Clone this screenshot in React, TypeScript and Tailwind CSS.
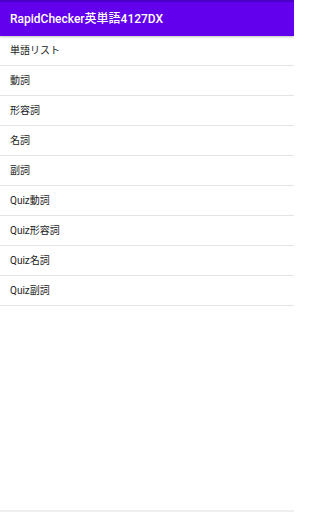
import React from "react";

const items = ["単語リスト", "動詞", "形容詞", "名詞", "副詞", "Quiz動詞", "Quiz形容詞", "Quiz名詞", "Quiz副詞"];

export default function App() {
  return (
    <div
      className="w-[294px] h-[512px] bg-white flex flex-col overflow-hidden"
      style={{ fontFamily: 'Roboto, "Noto Sans CJK JP", sans-serif' }}
    >
      <div className="h-[2px] bg-[#4a00c8]" />
      <div className="h-[34px] bg-[#6200ee] flex items-center px-[10px] shadow-[0_1px_2px_rgba(0,0,0,0.25)] relative z-10">
        <span className="text-white text-[12px] font-medium leading-none">RapidChecker英単語4127DX</span>
      </div>
      <div className="flex flex-col">
        {items.map((t) => (
          <div key={t} className="h-[30px] flex items-center px-[10px] border-b border-[#e4e4e4]">
            <span className="text-[10px] text-[#222] leading-none">{t}</span>
          </div>
        ))}
      </div>
      <div className="flex-1" />
      <div className="h-[2px] bg-[#eeeeee]" />
    </div>
  );
}
